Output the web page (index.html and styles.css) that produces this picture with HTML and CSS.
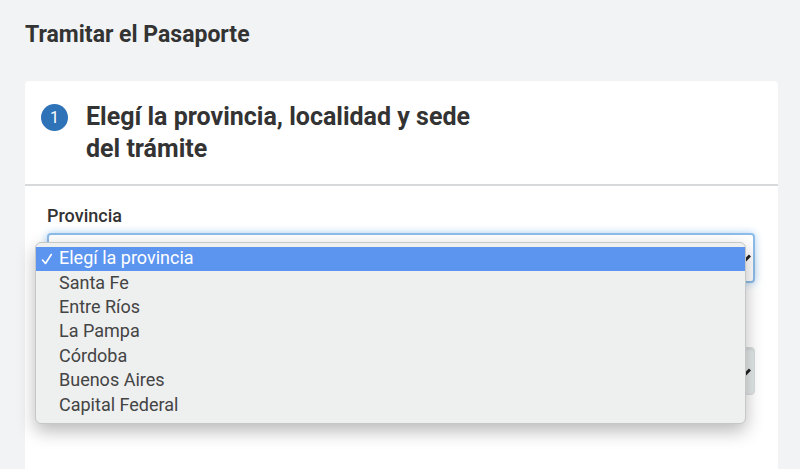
FILE: index.html
```html
<!DOCTYPE html>
<html lang="es">
<head>
<meta charset="utf-8">
<meta name="viewport" content="width=device-width, initial-scale=1">
<title>Tramitar el Pasaporte</title>
<link rel="stylesheet" href="styles.css">
</head>
<body>
<main class="page">
  <h1 class="page-title">Tramitar el Pasaporte</h1>
  <section class="card">
    <header class="card-header">
      <span class="step">1</span>
      <h2 class="card-title">Elegí la provincia, localidad y sede del trámite</h2>
    </header>
    <form class="card-body">
      <div class="field">
        <label class="label" for="provincia">Provincia</label>
        <div class="select-wrap">
          <select class="select select-active" id="provincia"><option></option></select>
          <svg class="chevron" viewBox="0 0 12 8" aria-hidden="true"><path d="M1 1.500 6 6.500l5-5"/></svg>
          <div class="menu" role="listbox" aria-label="Provincia">
            <button class="option option-selected" type="button" role="option" aria-selected="true"><svg class="check" viewBox="0 0 12 12" aria-hidden="true"><path d="M1.500 7 4.500 10.500 10.300 1.500"/></svg>Elegí la provincia</button>
            <button class="option" type="button" role="option">Santa Fe</button>
            <button class="option" type="button" role="option">Entre Ríos</button>
            <button class="option" type="button" role="option">La Pampa</button>
            <button class="option" type="button" role="option">Córdoba</button>
            <button class="option" type="button" role="option">Buenos Aires</button>
            <button class="option" type="button" role="option">Capital Federal</button>
          </div>
        </div>
      </div>
      <div class="field field-next">
        <div class="select-wrap">
          <select class="select" aria-label="Localidad" disabled><option></option></select>
          <svg class="chevron" viewBox="0 0 12 8" aria-hidden="true"><path d="M1 1.500 6 6.500l5-5"/></svg>
        </div>
      </div>
    </form>
  </section>
</main>
</body>
</html>
```
FILE: styles.css
```css
* {
  box-sizing: border-box;
}

body {
  margin: 0;
  background: #f1f3f5;
  color: #333;
  font-family: Roboto, "Liberation Sans", sans-serif;
}

.page {
  display: flex;
  flex-direction: column;
  min-height: 100vh;
  padding: 21px 22px 0 25px;
}

.page-title {
  margin: 0 0 32px;
  font-size: 23px;
  line-height: 28px;
  font-weight: 700;
}

.card {
  flex: 1;
  background: #fff;
  border-radius: 4px 4px 0 0;
}

.card-header {
  display: flex;
  align-items: flex-start;
  gap: 18px;
  padding: 20px 16px 19px;
  border-bottom: 2px solid #d8d9da;
}

.step {
  flex: none;
  width: 27px;
  margin-top: 3px;
  border-radius: 50%;
  background: #2e73b8;
  color: #fff;
  font-size: 16px;
  line-height: 27px;
  text-align: center;
}

.card-title {
  max-width: 420px;
  margin: 0;
  font-size: 25px;
  line-height: 32px;
  font-weight: 700;
}

.card-body {
  padding: 18px 23px 20px 22px;
}

.label {
  display: block;
  margin-bottom: 5px;
  font-size: 18px;
  line-height: 24px;
  font-weight: 500;
}

.field-next {
  margin-top: 64px;
}

.select-wrap {
  position: relative;
}

.select {
  display: block;
  width: 100%;
  height: 48px;
  border: 1px solid #d8ddde;
  border-radius: 4px;
  background: #e3e8e9;
  box-shadow: inset 0 2px 2px #d5dadb;
  appearance: none;
}

.select:disabled {
  opacity: 1;
}

.select-active {
  height: 50px;
  border: 2px solid #8dbce9;
  background: #fff;
  box-shadow: 0 0 9px #a9cff2;
}

.chevron {
  position: absolute;
  right: 4px;
  top: 21px;
  width: 12px;
  height: 8px;
  fill: none;
  stroke: #222;
  stroke-width: 3;
}

.menu {
  position: absolute;
  z-index: 1;
  top: 9px;
  left: -12px;
  right: 9px;
  display: grid;
  grid-template-rows: repeat(7, 1fr);
  min-height: 182px;
  padding: 4px 0 5px;
  border: 1px solid #c6c7c7;
  border-radius: 6px;
  background: #eeefef;
  box-shadow: 0 7px 18px rgba(0, 0, 0, 0.28);
}

.option {
  position: relative;
  padding: 0 23px 3px;
  border: 0;
  background: none;
  color: #444;
  font-family: inherit;
  font-size: 18px;
  line-height: 21px;
  text-align: left;
}

.option-selected {
  background: #5c95f0;
  color: #fff;
}

.check {
  position: absolute;
  left: 5px;
  top: 6px;
  width: 12px;
  height: 12px;
  fill: none;
  stroke: #fff;
  stroke-width: 1.6;
  stroke-linecap: round;
  stroke-linejoin: round;
}
```
